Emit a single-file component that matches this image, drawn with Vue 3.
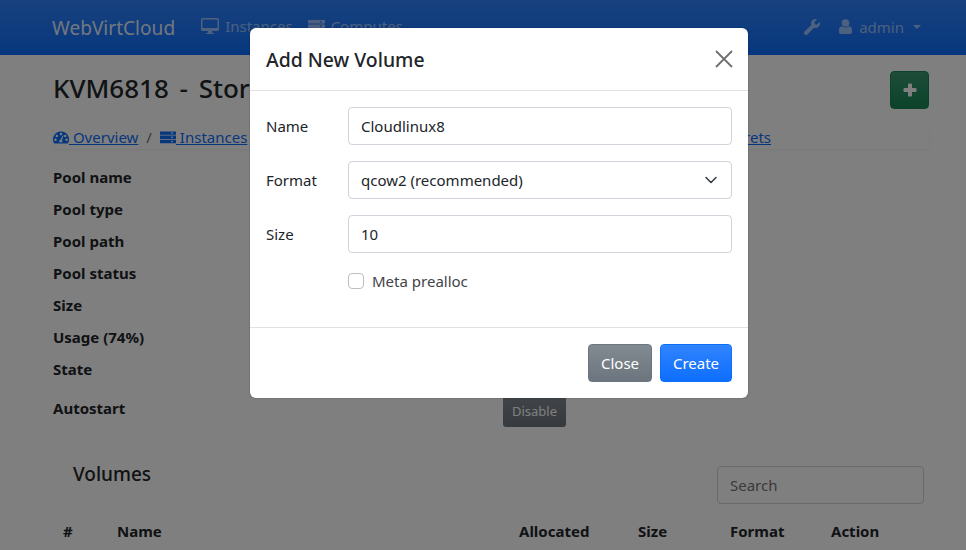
<script setup>
const rows = [
  { label: 'Pool name' },
  { label: 'Pool type' },
  { label: 'Pool path' },
  { label: 'Pool status' },
  { label: 'Size' },
  { label: 'Usage (74%)' },
  { label: 'State' }
]
const heads = [
  { t: '#', w: 54 },
  { t: 'Name', w: 402 },
  { t: 'Allocated', w: 119 },
  { t: 'Size', w: 92 },
  { t: 'Format', w: 101 },
  { t: 'Action', w: 90 }
]
</script>

<template>
  <div class="page">
    <nav class="navbar">
      <span class="brand">WebVirtCloud</span>
      <span class="nav-link">
        <svg class="ic" width="18" height="16" viewBox="0 0 18 16"><path fill-rule="evenodd" d="M1.5 0h15A1.5 1.5 0 0 1 18 1.5v10a1.5 1.5 0 0 1-1.5 1.5H11l.5 2H13v1H5v-1h1.500l.5-2H1.500A1.500 1.500 0 0 1 0 11.500v-10A1.500 1.500 0 0 1 1.500 0zM1.500 1.500v8.500h15V1.500z"/></svg>
        Instances
      </span>
      <span class="nav-link">
        <svg class="ic" width="17" height="15" viewBox="0 0 17 15"><path fill-rule="evenodd" d="M0 1h17v3.500H0zM0 5.500h17V9H0zM0 10h17v3.500H0zM12 2v1.500h1.500V2zM12 6.500V8h1.500V6.500zM12 11v1.500h1.500V11z"/></svg>
        Computes
      </span>
      <span class="nav-right">
        <svg class="ic" width="16" height="16" viewBox="0 0 512 512"><path d="M507.73 109.1c-2.24-9.03-13.54-12.09-20.12-5.51l-74.36 74.36-67.88-11.31-11.31-67.88 74.36-74.36c6.62-6.62 3.43-17.9-5.66-20.16-47.38-11.74-99.55.91-136.58 37.93-39.64 39.64-50.55 97.1-34.05 147.2L18.74 402.76c-24.99 24.99-24.99 65.51 0 90.5 24.99 24.99 65.51 24.99 90.5 0l213.21-213.21c50.12 16.71 107.47 5.68 147.37-34.22 37.07-37.07 49.7-89.32 37.91-136.730z"/></svg>
        <span class="user">
          <svg class="ic" width="13" height="15" viewBox="0 0 13 15"><circle cx="6.500" cy="4" r="3.800"/><path d="M0 13v-2.500C0 8.500 1.500 7.500 3 7.300c1 .8 2.200 1.200 3.500 1.200S9 8.100 10 7.300c1.500.2 3 1.200 3 3.200V13c0 1.200-.9 2-2 2H2c-1.100 0-2-.8-2-2z"/></svg>
          admin
          <span class="caret"></span>
        </span>
      </span>
    </nav>

    <main class="content">
      <div class="title-row">
        <h1>KVM6818 - Storage</h1>
        <button class="add" type="button" aria-label="Add">
          <svg width="14" height="14" viewBox="0 0 14 14"><path d="M5 1.500A1 1 0 0 1 6 .5h2a1 1 0 0 1 1 1V5h3.500a1 1 0 0 1 1 1v2a1 1 0 0 1-1 1H9v3.500a1 1 0 0 1-1 1H6a1 1 0 0 1-1-1V9H1.500a1 1 0 0 1-1-1V6a1 1 0 0 1 1-1H5z" fill="currentColor"/></svg>
        </button>
      </div>

      <div class="crumbs">
        <a><svg class="ic" width="16" height="15" viewBox="0 0 17 15"><path fill-rule="evenodd" d="M8.500 1a8.500 8.500 0 0 0-7.200 13h14.400A8.500 8.500 0 0 0 8.500 1zM8.500 2.500a1.300 1.300 0 1 1 0 2.600 1.300 1.300 0 0 1 0-2.600zM4 4.500a1.300 1.300 0 1 1 0 2.600 1.300 1.300 0 0 1 0-2.600zM2.600 8.500a1.300 1.300 0 1 1 0 2.600 1.300 1.300 0 0 1 0-2.600zM14.400 8.500a1.300 1.300 0 1 1 0 2.600 1.300 1.300 0 0 1 0-2.600zM13 4.500a1.300 1.300 0 1 1 0 2.600 1.300 1.300 0 0 1 0-2.600zM7 12.500a1.600 1.600 0 0 1 .9-2.500L10.500 5l.8.4-1.900 5a1.600 1.600 0 0 1 .2 2.100z"/></svg> Overview</a>
        <span class="sep">/</span>
        <a><svg class="ic" width="16" height="15" viewBox="0 0 17 15"><path fill-rule="evenodd" d="M0 1h17v3.500H0zM0 5.500h17V9H0zM0 10h17v3.500H0zM12 2v1.500h1.500V2zM12 6.500V8h1.500V6.500zM12 11v1.500h1.500V11z"/></svg> Instances</a>
        <a class="secrets">Secrets</a>
      </div>

      <div class="info">
        <div v-for="r in rows" :key="r.label" class="info-row">{{ r.label }}</div>
        <div class="info-row autostart">
          <span class="auto-label">Autostart</span>
          <button class="disable" type="button">Disable</button>
        </div>
      </div>

      <div class="vol-row">
        <h2>Volumes</h2>
        <input class="search" placeholder="Search" />
      </div>

      <div class="table-head">
        <span v-for="h in heads" :key="h.t" class="th" :style="{ width: h.w + 'px' }">{{ h.t }}</span>
      </div>
    </main>

    <div class="backdrop"></div>

    <section class="modal">
      <header class="m-head">
        <h3>Add New Volume</h3>
        <svg class="x" width="18" height="18" viewBox="0 0 18 18"><path d="M1 1l16 16M17 1L1 17" stroke="#6f6f6f" stroke-width="1.800" fill="none"/></svg>
      </header>
      <div class="m-body">
        <div class="field">
          <label>Name</label>
          <div class="control">Cloudlinux8</div>
        </div>
        <div class="field">
          <label>Format</label>
          <div class="control select">
            qcow2 (recommended)
            <svg width="12" height="8" viewBox="0 0 12 8"><path d="M1 1.500l5 5 5-5" stroke="#343a40" stroke-width="1.500" fill="none" stroke-linecap="round" stroke-linejoin="round"/></svg>
          </div>
        </div>
        <div class="field">
          <label>Size</label>
          <div class="control">10</div>
        </div>
        <div class="check-row">
          <span class="box"></span>
          <span>Meta prealloc</span>
        </div>
      </div>
      <footer class="m-foot">
        <button class="btn close" type="button">Close</button>
        <button class="btn create" type="button">Create</button>
      </footer>
    </section>
  </div>
</template>

<style>
html, body { margin: 0; overflow: hidden; }
</style>

<style scoped>
.page {
  position: relative;
  width: 966px;
  height: 550px;
  overflow: hidden;
  background: #fff;
  color: #212529;
  font-family: "Noto Sans", "Open Sans", sans-serif;
  font-size: 15px;
}
.navbar {
  height: 55px;
  box-sizing: border-box;
  display: flex;
  align-items: center;
  padding: 0 45px 0 52px;
  background: linear-gradient(180deg, #3184fd, #0d6efd);
  color: rgba(255, 255, 255, .55);
}
.brand { font-size: 19.100px; color: rgba(255, 255, 255, .9); margin-right: 26px; }
.nav-link { display: flex; align-items: center; gap: 6px; margin-right: 15px; padding-bottom: 3px; }
.ic { fill: currentColor; flex: none; }
.nav-right { margin-left: auto; display: flex; align-items: center; gap: 19px; padding-bottom: 2px; }
.user { display: flex; align-items: center; gap: 7px; }
.caret { border: 4.500px solid transparent; border-top-color: currentColor; border-bottom: 0; margin-left: 2px; }
.content { padding: 0 37px 0 53px; }
.title-row { display: flex; justify-content: space-between; align-items: center; height: 70px; }
h1 { font-size: 26px; font-weight: 500; margin: -4px 0 0; word-spacing: 4px; white-space: nowrap; }
.add {
  width: 39px; height: 38px; padding: 0; border: 1px solid #198754; border-radius: 4px;
  background: linear-gradient(180deg, #3b9974, #198754); color: #fff;
  display: grid; place-items: center;
}
.crumbs {
  display: flex; align-items: center; height: 24px;
  box-shadow: 0 1px 4px rgba(0, 0, 0, .06);
}
.crumbs a { color: #0d6efd; text-decoration: underline; }
.crumbs .ic { vertical-align: -2px; }
.sep { color: #6c757d; margin: 0 8px; }
.secrets { margin-left: auto; margin-right: 158px; }
.info { margin-top: 12px; }
.info-row { height: 32px; display: flex; align-items: center; font-weight: 700; }
.autostart { height: 46px; position: relative; }
.auto-label { width: 450px; }
.disable {
  height: 31px; width: 63px; border: 0; border-radius: 3px; padding: 0; margin-top: 6px;
  background: linear-gradient(180deg, #828a91, #6c757d); color: #fff;
  font: 13px "Noto Sans", sans-serif;
}
.vol-row { display: flex; justify-content: space-between; margin-top: 35px; padding: 0 5px 0 20px; }
h2 { font-size: 19px; font-weight: 500; margin: -6px 0 0; line-height: 28px; }
.search {
  width: 207px; height: 38px; box-sizing: border-box; border: 1px solid #ced4da; border-radius: 4px;
  padding: 0 12px; font: 15px "Noto Sans", sans-serif; background: #fff;
}
.table-head { display: flex; margin-top: 17px; padding-left: 10px; font-weight: 700; }
.th { flex: none; }

.backdrop { position: absolute; inset: 0; background: rgba(0, 0, 0, .5); }
.modal {
  position: absolute; left: 250px; top: 28px; width: 498px; height: 370px; box-sizing: border-box;
  background: #fff; border-radius: 6px; box-shadow: 0 0 2px rgba(0, 0, 0, .3);
  display: flex; flex-direction: column;
}
.m-head {
  height: 63px; box-sizing: border-box; border-bottom: 1px solid #dee2e6;
  display: flex; align-items: center; justify-content: space-between; padding: 0 15px 0 16px;
}
h3 { font-size: 19.400px; font-weight: 500; margin: 0; }
.m-body { flex: 1; padding: 16px; }
.field { display: flex; align-items: center; margin-bottom: 16px; }
.field label { width: 82px; }
.control {
  flex: 1; height: 38px; box-sizing: border-box; border: 1px solid #ced4da; border-radius: 4px;
  display: flex; align-items: center; padding: 0 12px; color: #212529;
}
.select { justify-content: space-between; padding-right: 14px; }
.check-row { display: flex; align-items: center; gap: 8px; margin-left: 82px; margin-top: 18px; color: #3f4448; }
.box { width: 16px; height: 16px; box-sizing: border-box; border: 1px solid #bfbfbf; border-radius: 4px; }
.m-foot {
  height: 71px; box-sizing: border-box; border-top: 1px solid #dee2e6;
  display: flex; justify-content: flex-end; align-items: center; gap: 8px; padding: 0 16px;
}
.btn {
  height: 38px; border: 1px solid; border-radius: 4px; color: #fff; padding: 0;
  font: 15px "Noto Sans", sans-serif;
}
.close { width: 64px; background: linear-gradient(180deg, #828a91, #6c757d); border-color: #6c757d; }
.create { width: 72px; background: linear-gradient(180deg, #3184fd, #0d6efd); border-color: #0d6efd; }
</style>
